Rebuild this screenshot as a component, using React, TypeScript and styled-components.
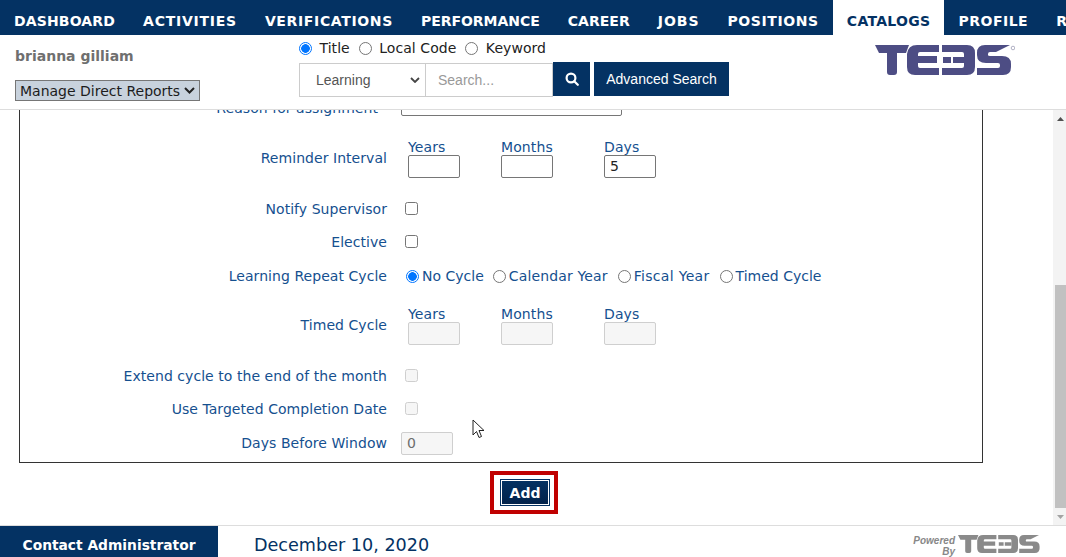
import React from "react";
import styled, { createGlobalStyle } from "styled-components";

const Global = createGlobalStyle`
  html, body { margin: 0; padding: 0; height: 100%; overflow: hidden; background: #fff; }
  #root { height: 100%; }
  * { box-sizing: border-box; }
`;
const NAVY = "#043263";
const BLUE = "#15508f";
const Page = styled.div`
  width: 1066px; height: 557px; display: flex; flex-direction: column; overflow: hidden;
  font-family: "DejaVu Sans", Verdana, sans-serif; position: relative;
`;
const Nav = styled.nav`
  height: 35px; flex: none; background: ${NAVY}; display: flex; overflow: hidden;
`;
const NavItem = styled.div<{ $active?: boolean; $ls: number }>`
  flex: none; height: 35px; padding: 6px 14px 0; display: flex; align-items: center;
  font-weight: 700; font-size: 14px; letter-spacing: ${(p) => p.$ls}px;
  color: ${(p) => (p.$active ? NAVY : "#fff")}; background: ${(p) => (p.$active ? "#fff" : "transparent")};
`;
const Header = styled.header`
  height: 75px; flex: none; border-bottom: 1px solid #ddd; display: flex; background: #fff;
`;
const UserCol = styled.div`
  width: 299px; flex: none; padding: 13px 0 0 15px; display: flex; flex-direction: column; align-items: flex-start;
`;
const UserName = styled.div`
  font-size: 14px; font-weight: 700; color: #6f6f6f; line-height: 17px;
`;
const Manage = styled.div`
  margin-top: 15px; width: 185px; height: 21px; background: #c8d2dd; border: 1px solid #767676; display: flex; align-items: center;
  justify-content: space-between; padding: 0 4px; font-size: 14px; color: #1c1c1c; white-space: nowrap;
`;
const SearchCol = styled.div`
  width: 530px; flex: none; display: flex; flex-direction: column; padding-top: 3px;
`;
const RadioRow = styled.div`
  display: flex; align-items: center; height: 20px; font-size: 14px; color: #222; letter-spacing: 0.05px;
`;
const RadioLabel = styled.span`
  margin: 0 9px 0 7.5px;
`;
const Radio = styled.span<{ $on?: boolean }>`
  width: 13px; height: 13px; border-radius: 50%; flex: none; display: inline-block;
  border: ${(p) => (p.$on ? "1px solid #0075ff" : "1px solid #767676")};
  background: ${(p) => (p.$on ? "radial-gradient(circle, #0075ff 0 4px, #fff 4.6px)" : "#fff")};
`;
const SearchRow = styled.div`
  display: flex; margin-top: 4px; height: 35px;
`;
const SelectBox = styled.div`
  width: 127px; height: 34px; margin-top: 1px; border: 1px solid #ccc; display: flex; align-items: center; justify-content: space-between;
  padding: 0 5px 0 16px; font-family: "Liberation Sans", Arial, sans-serif; font-size: 14px; color: #555;
`;
const SearchBox = styled.div`
  width: 127px; height: 34px; margin-top: 1px; border: 1px solid #ccc; border-left: none; display: flex; align-items: center;
  padding-left: 12px; font-family: "Liberation Sans", Arial, sans-serif; font-size: 14px; color: #999;
`;
const IconBtn = styled.div`
  width: 37px; height: 34px; background: ${NAVY}; display: flex; align-items: center; justify-content: center;
`;
const AdvBtn = styled.div`
  margin-left: 4px; width: 135px; height: 34px; background: ${NAVY}; color: #fff; display: flex; align-items: center; justify-content: center;
  font-family: "Liberation Sans", Arial, sans-serif; font-size: 14px;
`;
const LogoCol = styled.div`
  flex: 1; padding: 10px 0 0 46px;
`;
const Main = styled.div`
  flex: 1; min-height: 0; display: flex;
`;
const Scroller = styled.div`
  flex: 1; min-width: 0; overflow: hidden; display: flex; flex-direction: column; justify-content: flex-end; padding: 0 0 11px 19px;
`;
const FormBox = styled.div`
  width: 964px; flex: none; border: 1px solid #333; border-top: none; display: flex; flex-direction: column;
`;
const Row = styled.div<{ $h: number; $pb?: number }>`
  display: flex; height: ${(p) => p.$h}px; align-items: center; padding-bottom: ${(p) => p.$pb ?? 0}px;
`;
const Label = styled.div`
  width: 367px; flex: none; text-align: right; font-size: 14px; color: ${BLUE}; white-space: nowrap; letter-spacing: 0.05px;
`;
const ClippedLabel = styled(Label)`
  padding: 8px 9px 0 0;
`;
const Field = styled.div`
  margin-left: 14px; display: flex; align-items: center; font-size: 14px; color: ${BLUE};
`;
const CycleField = styled(Field)`
  padding-left: 5px;
`;
const Reason = styled.div`
  width: 221px; height: 23px; border: 1px solid #767676; border-radius: 2px;
`;
const Triple = styled.div`
  display: flex; margin-left: 7px;
`;
const Input = styled.div<{ $disabled?: boolean }>`
  width: 52px; height: 23px; border-radius: 2px; font-size: 14px; line-height: 21px; padding-left: 5px;
  border: 1px solid ${(p) => (p.$disabled ? "#cfcfcf" : "#767676")};
  background: ${(p) => (p.$disabled ? "#f6f6f6" : "#fff")};
  color: ${(p) => (p.$disabled ? "#6d6d6d" : "#222")};
`;
const Part = styled.div`
  display: flex; flex-direction: column; font-size: 14px; color: ${BLUE}; line-height: 17px; letter-spacing: 0.1px; padding-top: 1px;
  ${Input} { margin-top: -1px; letter-spacing: 0; }
`;
const PartGap = styled.div<{ $w: number }>`
  width: ${(p) => p.$w}px; flex: none;
`;
const Check = styled.span<{ $disabled?: boolean }>`
  width: 13px; height: 13px; margin: 0 0 2px 4px; border-radius: 2.5px; display: inline-block; flex: none;
  border: 1px solid ${(p) => (p.$disabled ? "#cfcfcf" : "#767676")};
  background: ${(p) => (p.$disabled ? "#f6f6f6" : "#fff")};
`;
const Cycle = styled.span<{ $mr: number; $ls: number }>`
  margin: 0 ${(p) => p.$mr}px 0 3px; white-space: nowrap; letter-spacing: ${(p) => p.$ls}px;
`;
const Actions = styled.div`
  flex: none; display: flex; justify-content: center; padding-top: 8px; padding-right: 24px;
`;
const Highlight = styled.div`
  width: 68px; height: 43px; border: 4px solid #c00000; display: flex; align-items: center; justify-content: flex-start; padding-left: 6px;
`;
const AddBtn = styled.div`
  width: 50px; height: 27px; border: 1px solid ${NAVY}; box-shadow: inset 0 0 0 1px #fff;
  background: linear-gradient(#043263, #02224a); color: #fff; font-size: 14px; font-weight: 700; display: flex; align-items: center; justify-content: center;
`;
const Scrollbar = styled.div`
  width: 13px; flex: none; background: #f3f3f3; display: flex; flex-direction: column; align-items: flex-end;
`;
const Arrow = styled.div`
  height: 17px; width: 11px; flex: none; display: flex; align-items: center; justify-content: center;
`;
const Thumb = styled.div`
  width: 11px; height: 223px; margin-top: auto; background: #c1c1c1;
`;
const Footer = styled.footer`
  height: 32px; flex: none; border-top: 1px solid #ddd; display: flex; background: #fff; align-items: stretch;
`;
const Contact = styled.div`
  width: 218px; background: ${NAVY}; color: #fff; font-size: 13.8px; font-weight: 700; display: flex; align-items: center; justify-content: center;
  padding: 6px 0 0 0;
`;
const DateText = styled.div`
  margin-left: 36px; font-size: 17.6px; color: ${NAVY}; display: flex; align-items: center; padding-top: 6px; flex: 1;
`;
const Powered = styled.div`
  display: flex; align-items: flex-start; padding: 9px 24px 0 0; gap: 3px;
`;
const PoweredText = styled.div`
  font-family: "Liberation Sans", Arial, sans-serif; font-style: italic; font-weight: 700; font-size: 10px; line-height: 11px; color: #888; text-align: right;
`;
const Cursor = styled.svg`
  position: absolute; left: 472px; top: 419px;
`;

const Logo = ({ color, w, h, mark }: { color: string; w: number; h: number; mark?: boolean }) => (
  <svg width={w} height={h} viewBox="0 0 140 30" fill={color}>
    <path d="M0 0H34L31 8H22V27Q22 30 19 30H15Q12 30 12 27V8H4Z" />
    <path d="M42 0H64V7H45Q43 7 43 9V11H62V18H43V21Q43 23 45 23H64V30H40Q32 30 32 22V9Q33 0 42 0Z" />
    <path d="M67 0H92Q100 0 100 8V22Q100 30 92 30H67V23H87Q89 23 89 21V9Q89 7 87 7H67Z" />
    <path d="M68 12H76V18H68ZM78 12H89V18H78Z" />
    <path d="M110 0H135L121 7H115Q113 7 113 9V10Q113 11 115 11H127Q136 11 136 19V22Q136 30 128 30H102V23H123Q125 23 125 21V20Q125 18 123 18H111Q102 18 102 10V8Q102 0 110 0Z" />
    {mark && <circle cx="138" cy="3" r="1.8" fill="none" stroke="#b0b0c4" strokeWidth="1" />}
  </svg>
);

const NAV_ITEMS: { name: string; ls: number }[] = [
  { name: "DASHBOARD", ls: 0.15 },
  { name: "ACTIVITIES", ls: 0.75 },
  { name: "VERIFICATIONS", ls: 0.65 },
  { name: "PERFORMANCE", ls: -0.04 },
  { name: "CAREER", ls: 0.05 },
  { name: "JOBS", ls: 0.95 },
  { name: "POSITIONS", ls: 0.6 },
  { name: "CATALOGS", ls: 0.3 },
  { name: "PROFILE", ls: 0.5 },
  { name: "REPORTS", ls: 0.05 },
];

export default function App() {
  return (
    <Page>
      <Global />
      <Nav>
        {NAV_ITEMS.map((n) => (
          <NavItem key={n.name} $ls={n.ls} $active={n.name === "CATALOGS"}>{n.name}</NavItem>
        ))}
      </Nav>
      <Header>
        <UserCol>
          <UserName>brianna gilliam</UserName>
          <Manage>
            Manage Direct Reports
            <svg width="11" height="7" viewBox="0 0 11 7"><path d="M1 1l4.5 4.5L10 1" fill="none" stroke="#222" strokeWidth="2" /></svg>
          </Manage>
        </UserCol>
        <SearchCol>
          <RadioRow>
            <Radio $on /><RadioLabel>Title</RadioLabel>
            <Radio /><RadioLabel>Local Code</RadioLabel>
            <Radio /><RadioLabel>Keyword</RadioLabel>
          </RadioRow>
          <SearchRow>
            <SelectBox>
              Learning
              <svg width="10" height="6" viewBox="0 0 10 6"><path d="M1 1l4 4 4-4" fill="none" stroke="#444" strokeWidth="1.8" /></svg>
            </SelectBox>
            <SearchBox>Search...</SearchBox>
            <IconBtn>
              <svg width="14" height="14" viewBox="0 0 14 14" fill="none" stroke="#fff" strokeWidth="2.2"><circle cx="6" cy="6" r="4.4" /><path d="M9.2 9.2l3.6 3.6" strokeLinecap="round" /></svg>
            </IconBtn>
            <AdvBtn>Advanced Search</AdvBtn>
          </SearchRow>
        </SearchCol>
        <LogoCol><Logo color="#4d4d84" w={140} h={30} mark /></LogoCol>
      </Header>
      <Main>
        <Scroller>
          <FormBox>
            <Row $h={32}><ClippedLabel>Reason for assignment</ClippedLabel><Field><Reason /></Field></Row>
            <Row $h={76}>
              <Label>Reminder Interval</Label>
              <Field>
                <Triple>
                  <Part>Years<Input /></Part><PartGap $w={41} />
                  <Part>Months<Input /></Part><PartGap $w={51} />
                  <Part>Days<Input>5</Input></Part>
                </Triple>
              </Field>
            </Row>
            <Row $h={26}><Label>Notify Supervisor</Label><Field><Check /></Field></Row>
            <Row $h={40}><Label>Elective</Label><Field><Check /></Field></Row>
            <Row $h={28}>
              <Label>Learning Repeat Cycle</Label>
              <CycleField>
                <Radio $on /><Cycle $mr={9} $ls={0}>No Cycle</Cycle>
                <Radio /><Cycle $mr={10} $ls={0.15}>Calendar Year</Cycle>
                <Radio /><Cycle $mr={10} $ls={0.3}>Fiscal Year</Cycle>
                <Radio /><Cycle $mr={0} $ls={0}>Timed Cycle</Cycle>
              </CycleField>
            </Row>
            <Row $h={70}>
              <Label>Timed Cycle</Label>
              <Field>
                <Triple>
                  <Part>Years<Input $disabled /></Part><PartGap $w={41} />
                  <Part>Months<Input $disabled /></Part><PartGap $w={51} />
                  <Part>Days<Input $disabled /></Part>
                </Triple>
              </Field>
            </Row>
            <Row $h={32}><Label>Extend cycle to the end of the month</Label><Field><Check $disabled /></Field></Row>
            <Row $h={34}><Label>Use Targeted Completion Date</Label><Field><Check $disabled /></Field></Row>
            <Row $h={36} $pb={2}><Label>Days Before Window</Label><Field><Input $disabled>0</Input></Field></Row>
          </FormBox>
          <Actions>
            <Highlight><AddBtn>Add</AddBtn></Highlight>
          </Actions>
        </Scroller>
        <Scrollbar>
          <Arrow><svg width="7" height="4" viewBox="0 0 7 4"><path d="M3.5 0L7 4H0z" fill="#505050" /></svg></Arrow>
          <Thumb />
          <Arrow><svg width="7" height="4" viewBox="0 0 7 4"><path d="M0 0h7L3.5 4z" fill="#a3a3a3" /></svg></Arrow>
        </Scrollbar>
      </Main>
      <Footer>
        <Contact>Contact Administrator</Contact>
        <DateText>December 10, 2020</DateText>
        <Powered>
          <PoweredText>Powered<br />By</PoweredText>
          <Logo color="#8a8a8a" w={84} h={18} />
        </Powered>
      </Footer>
      <Cursor width="14" height="20" viewBox="0 0 14 20">
        <path d="M1 1v15l3.5-3.5 2.5 6 2.5-1-2.5-6h5z" fill="#fff" stroke="#222" strokeWidth="1" />
      </Cursor>
    </Page>
  );
}
